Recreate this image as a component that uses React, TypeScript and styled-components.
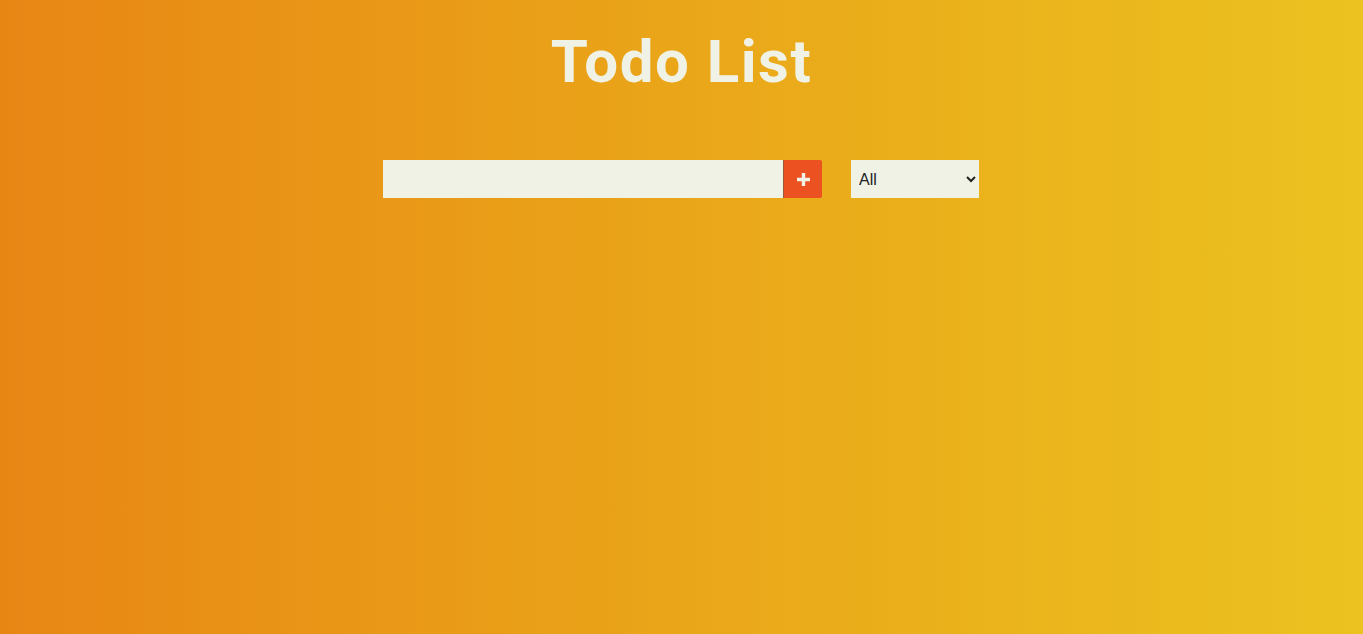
import { useState } from 'react';
import styled, { createGlobalStyle } from 'styled-components';

const GlobalStyle = createGlobalStyle`
  * {
    margin: 0;
    padding: 0;
    box-sizing: border-box;
  }

  body {
    min-height: 100vh;
    background: linear-gradient(90deg, #e88614 0%, #eaa619 50%, #ebc21f 100%);
    font-family: Roboto, 'Liberation Sans', sans-serif;
    color: #f1f2e6;
  }
`;

const Header = styled.header`
  display: flex;
  justify-content: center;
  padding-top: 26px;
`;

const Title = styled.h1`
  font-size: 60px;
  font-weight: 700;
  letter-spacing: 1.5px;
  line-height: 72px;
  color: #f1f2e6;
`;

const Form = styled.form`
  display: flex;
  justify-content: center;
  align-items: center;
  margin-top: 62px;
  padding-right: 1px;
  gap: 29px;
`;

const InputGroup = styled.div`
  display: flex;
`;

const TodoInput = styled.input`
  width: 400px;
  height: 38px;
  border: none;
  outline: none;
  padding: 0 8px;
  font-size: 18px;
  background: #f1f2e6;
  font-family: Roboto, 'Liberation Sans', sans-serif;
`;

const AddButton = styled.button`
  display: flex;
  align-items: center;
  justify-content: center;
  width: 39px;
  height: 38px;
  border: none;
  border-left: 1px solid #9a5a3a;
  border-radius: 0 2px 2px 0;
  background: #eb5121;
  color: #f1f2e6;
  cursor: pointer;
`;

const FilterSelect = styled.select`
  width: 128px;
  height: 38px;
  border: none;
  outline: none;
  padding: 0 4px;
  font-size: 16px;
  color: #222;
  background: #f1f2e6;
  font-family: 'Liberation Sans', Arial, sans-serif;
`;

function PlusIcon() {
  return (
    <svg width="15" height="15" viewBox="0 0 15 15">
      <path d="M7.5 1v13M1 7.5h13" stroke="currentColor" strokeWidth="3.4" />
    </svg>
  );
}

function App() {
  const [text, setText] = useState('');
  const [filter, setFilter] = useState('all');

  return (
    <>
      <GlobalStyle />
      <Header>
        <Title>Todo List</Title>
      </Header>
      <Form onSubmit={(e) => e.preventDefault()}>
        <InputGroup>
          <TodoInput value={text} onChange={(e) => setText(e.target.value)} />
          <AddButton type="submit">
            <PlusIcon />
          </AddButton>
        </InputGroup>
        <FilterSelect value={filter} onChange={(e) => setFilter(e.target.value)}>
          <option value="all">All</option>
          <option value="completed">Completed</option>
          <option value="uncompleted">Uncompleted</option>
        </FilterSelect>
      </Form>
    </>
  );
}

export default App;
